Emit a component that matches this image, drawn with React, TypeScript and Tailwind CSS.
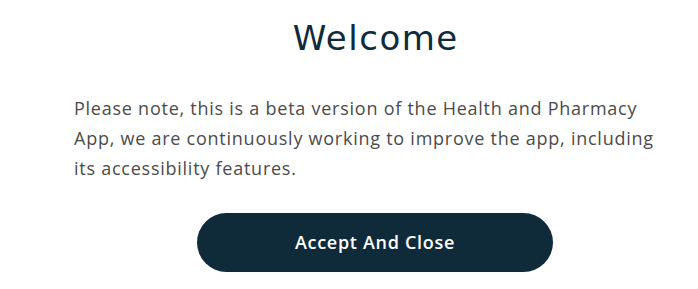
export default function App() {
  return (
    <div className="w-[698px] h-[289px] bg-white overflow-hidden">
      <div className="ml-[74px] w-[602px] flex flex-col items-center pt-[14px]">
        <h1 className="pl-[1.5px] text-[34px] leading-[48px] font-normal tracking-[1.5px] text-[#0f2a3a] text-center font-['DejaVu_Sans',sans-serif]">
          Welcome
        </h1>
        <p className="mt-[31px] w-[590px] self-start text-[18px] leading-[30px] tracking-[0.75px] text-[#4b4b4b] font-['Open_Sans',sans-serif]">
          Please note, this is a beta version of the Health and Pharmacy App, we are continuously working to improve the app, including its accessibility features.
        </p>
        <button className="mt-[30px] w-[356px] h-[59px] rounded-full bg-[#0f2b3a] text-white text-[18px] font-semibold tracking-[0.7px] font-['Open_Sans',sans-serif]">
          Accept And Close
        </button>
      </div>
    </div>
  );
}
